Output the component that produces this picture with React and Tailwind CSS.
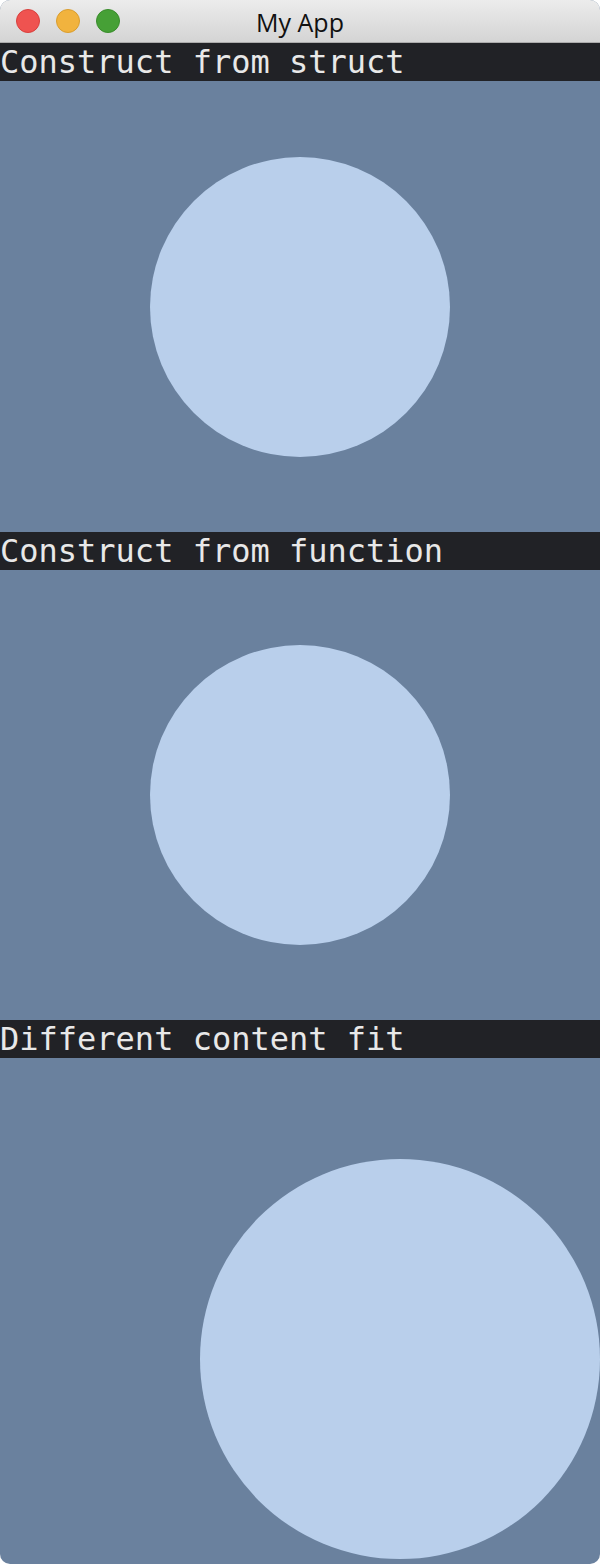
import React from "react";

function Header({ children }) {
  return (
    <div
      className="h-[38px] bg-[#212226] text-[#e8e8e8] text-[32px] leading-[38px] whitespace-nowrap overflow-hidden"
      style={{ fontFamily: '"DejaVu Sans Mono", monospace' }}
    >
      {children}
    </div>
  );
}

export default function App() {
  return (
    <div className="w-[600px] h-[1564px] bg-white">
      <div className="w-full h-full flex flex-col rounded-[10px] overflow-hidden bg-[#6a819e]">
        <div className="relative h-[43px] shrink-0 bg-gradient-to-b from-[#ececec] to-[#d4d4d4] border-b border-[#acacac] flex items-center">
          <div className="flex items-center gap-[16px] pl-[16px]">
            <div className="w-[24px] h-[24px] rounded-full bg-[#ef5350] border border-[#d8403d]" />
            <div className="w-[24px] h-[24px] rounded-full bg-[#f1b33e] border border-[#d99d2f]" />
            <div className="w-[24px] h-[24px] rounded-full bg-[#46a036] border border-[#3a8c2c]" />
          </div>
          <div
            className="absolute inset-0 flex items-center justify-center pt-[3px] text-[25px] text-[#111111]"
            style={{ fontFamily: '"Open Sans", "Liberation Sans", sans-serif' }}
          >
            My App
          </div>
        </div>
        <Header>Construct from struct</Header>
        <div className="h-[451px] shrink-0 flex items-center justify-center">
          <div className="w-[300px] h-[300px] rounded-full bg-[#b9cfeb]" />
        </div>
        <Header>Construct from function</Header>
        <div className="h-[450px] shrink-0 flex items-center justify-center">
          <div className="w-[300px] h-[300px] rounded-full bg-[#b9cfeb]" />
        </div>
        <Header>Different content fit</Header>
        <div className="flex-1 flex justify-end items-start pt-[101px]">
          <div className="w-[400px] h-[400px] rounded-full bg-[#b9cfeb]" />
        </div>
      </div>
    </div>
  );
}
